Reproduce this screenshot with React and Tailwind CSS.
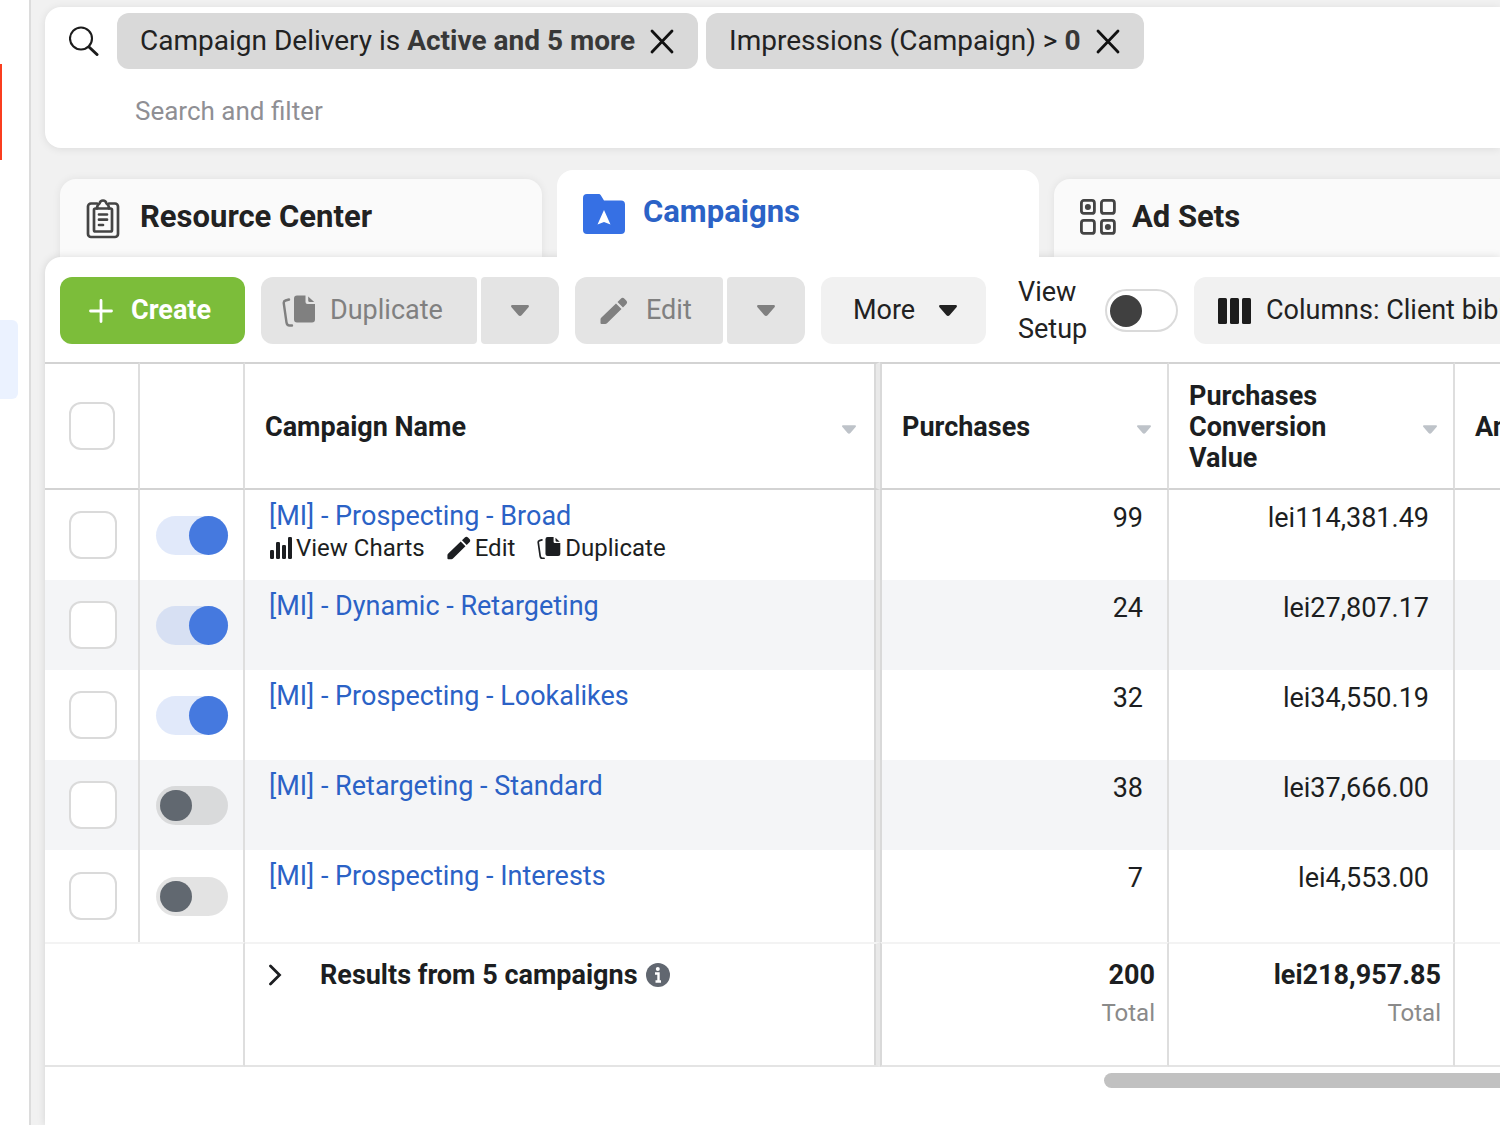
import clsx from "clsx";

const filters = [
  { id: "delivery", label: "Campaign Delivery is", value: "Active and 5 more" },
  { id: "impressions", label: "Impressions (Campaign) >", value: "0" },
];

const campaigns = [
  { id: 1, name: "[MI] - Prospecting - Broad", active: true, purchases: "99", value: "lei114,381.49", showActions: true },
  { id: 2, name: "[MI] - Dynamic - Retargeting", active: true, purchases: "24", value: "lei27,807.17" },
  { id: 3, name: "[MI] - Prospecting - Lookalikes", active: true, purchases: "32", value: "lei34,550.19" },
  { id: 4, name: "[MI] - Retargeting - Standard", active: false, purchases: "38", value: "lei37,666.00" },
  { id: 5, name: "[MI] - Prospecting - Interests", active: false, purchases: "7", value: "lei4,553.00" },
];

function SearchIcon() {
  return (
    <svg width="30" height="30" viewBox="0 0 30 30" fill="none" stroke="#1c1c1c" aria-hidden="true">
      <circle cx="12" cy="12.5" r="11" strokeWidth="2.1" />
      <path d="M20 21l8 7.5" strokeWidth="3" strokeLinecap="round" />
    </svg>
  );
}

function CloseIcon() {
  return (
    <svg width="26" height="26" viewBox="0 0 26 26" fill="none" stroke="#111" strokeWidth="2.8" strokeLinecap="round" aria-hidden="true">
      <path d="M3 3l20 21M23 3L3 24" />
    </svg>
  );
}

function ClipboardIcon() {
  return (
    <svg width="34" height="40" viewBox="0 0 34 40" fill="none" stroke="#444" strokeWidth="2.7" strokeLinecap="round" strokeLinejoin="round" aria-hidden="true">
      <path d="M11 4.5H5a3 3 0 0 0-3 3V35a3 3 0 0 0 3 3h24a3 3 0 0 0 3-3V7.5a3 3 0 0 0-3-3h-6" />
      <path d="M11 9.5H9.500A1.500 1.500 0 0 0 8 11v20a1.500 1.500 0 0 0 1.500 1.500h15A1.500 1.500 0 0 0 26 31V11a1.500 1.500 0 0 0-1.500-1.500H23" />
      <path d="M11 9.500c0-2.500 1-4 2.500-5C14 2.500 15.200 1.500 17 1.500s3 1 3.500 3c1.500 1 2.500 2.500 2.500 5z" />
      <path d="M13 15.500h8M13 20.700h8M13 26h4" />
    </svg>
  );
}

function FolderIcon() {
  return (
    <svg width="42" height="42" viewBox="0 0 42 42" aria-hidden="true">
      <path d="M4 0h11.500c1 0 1.800.5 2.300 1.300L21 6.500h17a4 4 0 0 1 4 4V36a4 4 0 0 1-4 4H4a4 4 0 0 1-4-4V4a4 4 0 0 1 4-4z" fill="#3670e4" />
      <path d="M21 16l6.500 14.500L21 28l-6.500 2.500z" fill="#fff" />
    </svg>
  );
}

function AdSetsIcon() {
  return (
    <svg width="36" height="36" viewBox="0 0 36 36" fill="none" stroke="#444" strokeWidth="2.8" aria-hidden="true">
      <rect x="1.400" y="1.400" width="13" height="13" rx="2.500" />
      <rect x="21.400" y="1.400" width="13" height="13" rx="2.500" />
      <rect x="1.400" y="21.400" width="13" height="13" rx="2.500" />
      <rect x="21.400" y="21.400" width="13" height="13" rx="2.500" />
      <circle cx="7.900" cy="7.900" r="3" fill="#444" stroke="none" />
      <circle cx="27.900" cy="27.900" r="3" fill="#444" stroke="none" />
    </svg>
  );
}

function DuplicateIcon({ className }) {
  return (
    <svg className={className} viewBox="0 0 34 32" aria-hidden="true">
      <path d="M7 4.500L3.500 5.500C2 6 1.500 7 1.800 8.500L4.500 27.500c.3 2 1.200 3 3 3H10" fill="none" stroke="currentColor" strokeWidth="2.400" strokeLinecap="round" />
      <path d="M15 .5h8.500V7a2 2 0 0 0 2 2H33v15.500a3 3 0 0 1-3 3H15a3 3 0 0 1-3-3V3.500a3 3 0 0 1 3-3z" fill="currentColor" />
      <path d="M26.200 1.500l6 5.500h-4.500a1.500 1.500 0 0 1-1.500-1.500z" fill="currentColor" />
    </svg>
  );
}

function PencilIcon({ className }) {
  return (
    <svg className={className} viewBox="0 0 28 28" fill="currentColor" aria-hidden="true">
      <path d="M16 6.500l5.500 5.500L7 26.300c-.5.500-1 .7-1.800.7H1.500a1 1 0 0 1-1-1v-3.500c0-.8.2-1.300.7-1.800z" />
      <path d="M17.500 5l3.300-3.300c1.200-1.200 2.500-1.200 3.700 0l1.700 1.800c1.200 1.200 1.200 2.500 0 3.700L23 10.500z" />
    </svg>
  );
}

function ChartIcon() {
  return (
    <svg width="23" height="22" viewBox="0 0 23 22" fill="#1c1e21" aria-hidden="true">
      <rect x="1" y="13" width="4" height="9" rx="1.200" />
      <rect x="7" y="5" width="4" height="17" rx="1.200" />
      <rect x="13" y="8" width="4" height="14" rx="1.200" />
      <rect x="19" y="0" width="4" height="22" rx="1.200" />
    </svg>
  );
}

function ColumnsIcon() {
  return (
    <svg width="34" height="26" viewBox="0 0 34 26" fill="#1c1c1c" aria-hidden="true">
      <rect x="0" y="0" width="9" height="26" rx="1.500" />
      <rect x="12" y="0" width="9" height="26" rx="1.500" />
      <rect x="24" y="0" width="9" height="26" rx="1.500" />
    </svg>
  );
}

function Caret({ className }) {
  return (
    <svg className={className} viewBox="0 0 18 11" fill="currentColor" aria-hidden="true">
      <path d="M1.500 0h15c1.300 0 1.900 1.200 1 2.200L10.800 10c-1 1.200-2.600 1.200-3.600 0L.5 2.200C-.4 1.200.2 0 1.500 0z" />
    </svg>
  );
}

function InfoIcon() {
  return (
    <svg width="24" height="24" viewBox="0 0 24 24" aria-hidden="true">
      <circle cx="12" cy="12" r="12" fill="#616770" />
      <circle cx="11.800" cy="6" r="2" fill="#fff" />
      <path d="M9 10.500h3.500V18M9.500 18.500h5.500" fill="none" stroke="#fff" strokeWidth="2.400" />
    </svg>
  );
}

function Tab({ icon, label, active }) {
  return (
    <button
      type="button"
      className={clsx(
        "flex w-[482px] shrink-0 items-start rounded-t-2xl px-[26px] text-left text-[31px] leading-9 font-bold",
        active ? "z-10 h-[88px] bg-white pt-6 text-[#2b62c6]" : "h-[79px] bg-[#fafafa] pt-5 text-[#222] shadow-[0_0_8px_rgba(0,0,0,0.07)]"
      )}
    >
      {icon}
      <span>{label}</span>
    </button>
  );
}

function Checkbox({ label, className }) {
  return (
    <input
      type="checkbox"
      aria-label={label}
      className={clsx("block h-12 appearance-none rounded-xl border-2 border-[#dadada] bg-white checked:bg-[#4579df]", className)}
    />
  );
}

function Toggle({ label, checked }) {
  return (
    <input
      type="checkbox"
      role="switch"
      aria-label={label}
      defaultChecked={checked}
      className="flex h-[39px] w-[72px] appearance-none items-center rounded-full bg-black/11 px-1 before:h-[31px] before:w-8 before:rounded-full before:bg-[#616870] checked:justify-end checked:bg-[#4579df]/16 checked:px-0 checked:before:h-[39px] checked:before:w-[39px] checked:before:bg-[#4579df]"
    />
  );
}

function HeaderCell({ label, className }) {
  return (
    <th scope="col" className={clsx("border-y-2 border-y-[#d3d3d3] pt-[2px] pl-5 text-left align-middle", className)}>
      <div className="flex items-center justify-between">
        <span>{label}</span>
        <Caret className="mt-1 h-[9px] w-[14px] shrink-0 text-[#bec3c9]" />
      </div>
    </th>
  );
}

const thin = "border-r-2 border-r-[#dedede]";
// the frozen columns end in a grey strip with a darker line on each side
const stripStart = "border-r-4 border-r-[#e9e9e9] shadow-[inset_-2px_0_#d9d9d9]";
const stripEnd = "border-l-2 border-l-[#d9d9d9]";
const footerLines = "border-y-2 border-t-[#f3f3f3] border-b-[#e4e4e4]";

function CampaignTable() {
  return (
    <table className="w-[1740px] table-fixed border-separate border-spacing-0 text-[27px] text-[#1c1e21]">
      <colgroup>
        <col className="w-[95px]" />
        <col className="w-[105px]" />
        <col className="w-[635px]" />
        <col className="w-[289px]" />
        <col className="w-[286px]" />
        <col />
      </colgroup>
      <thead>
        <tr className="h-32 leading-[31px] font-bold">
          <th scope="col" className={clsx("border-y-2 border-y-[#d3d3d3] pl-6", thin)}>
            <Checkbox label="Select all campaigns" className="w-[46px]" />
          </th>
          <td className={clsx("border-y-2 border-y-[#d3d3d3]", thin)} />
          <HeaderCell label="Campaign Name" className={clsx("pr-5", stripStart)} />
          <HeaderCell label="Purchases" className={clsx("pr-4", thin, stripEnd)} />
          <HeaderCell label={<>Purchases<br />Conversion<br />Value</>} className={clsx("pr-4", thin)} />
          <HeaderCell label="Amount Spent" className="pr-4" />
        </tr>
      </thead>
      <tbody>
        {campaigns.map((campaign) => (
          <tr key={campaign.id} className="h-[90px] last:h-[92px] even:bg-[#f4f5f7]">
            <td className={clsx("pl-6", thin)}>
              <Checkbox label={`Select ${campaign.name}`} className="w-12" />
            </td>
            <td className={clsx("pl-4", thin)}>
              <Toggle label={`Turn ${campaign.name} on or off`} checked={campaign.active} />
            </td>
            <td className={clsx("pt-[9px] pl-6 align-top", stripStart)}>
              <a href="#" className="block leading-[34px] text-[#2b62c6]">
                {campaign.name}
              </a>
              {campaign.showActions && (
                <div className="flex gap-[22px] text-2xl leading-[30px]">
                  <button type="button" className="flex items-center gap-1">
                    <ChartIcon />
                    View Charts
                  </button>
                  <button type="button" className="flex items-center gap-1">
                    <PencilIcon className="h-6 w-6" />
                    Edit
                  </button>
                  <button type="button" className="flex items-center gap-1">
                    <DuplicateIcon className="h-6 w-6" />
                    Duplicate
                  </button>
                </div>
              )}
            </td>
            <td className={clsx("pt-[11px] pr-6 text-right align-top leading-[34px]", thin, stripEnd)}>{campaign.purchases}</td>
            <td className={clsx("pt-[11px] pr-6 text-right align-top leading-[34px]", thin)}>{campaign.value}</td>
            <td />
          </tr>
        ))}
      </tbody>
      <tfoot>
        <tr className="h-[125px] align-top">
          <td colSpan={2} className={clsx(footerLines, thin)} />
          <td className={clsx("pt-[14px] pl-6", footerLines, stripStart)}>
            <div className="flex items-center leading-[34px] font-bold">
              <button type="button" aria-label="Expand results" className="w-[51px]">
                <svg width="14" height="22" viewBox="0 0 14 22" fill="none" stroke="#1c1e21" strokeWidth="2.800" strokeLinecap="round" aria-hidden="true">
                  <path d="M1.500 2l9 9-9 9" />
                </svg>
              </button>
              <span className="mr-2">Results from 5 campaigns</span>
              <InfoIcon />
            </div>
          </td>
          <td className={clsx("pt-[14px] pr-3 text-right", footerLines, thin, stripEnd)}>
            <div className="leading-[34px] font-bold">200</div>
            <div className="text-2xl leading-[42px] text-[#8a8a8a]">Total</div>
          </td>
          <td className={clsx("pt-[14px] pr-3 text-right", footerLines, thin)}>
            <div className="leading-[34px] font-bold">lei218,957.85</div>
            <div className="text-2xl leading-[42px] text-[#8a8a8a]">Total</div>
          </td>
          <td className={footerLines} />
        </tr>
      </tfoot>
    </table>
  );
}

export default function App() {
  const mutedButton = "flex h-[67px] shrink-0 items-center bg-[#e4e4e4] text-[#808080]";

  return (
    <div className="flex min-h-screen overflow-hidden bg-[#f1f1f1] font-['Roboto',sans-serif] text-[27px] text-[#222]">
      <aside className="flex w-[31px] shrink-0 flex-col border-r-2 border-[#dcdcdc] bg-white pt-16">
        <div className="h-24 w-[2px] bg-[#fa3e1f]" />
        <div className="mt-40 h-[79px] w-[18px] rounded-r-md bg-[#ebf2ff]" />
      </aside>

      <main className="flex min-w-0 flex-1 flex-col pt-[7px] pl-[14px]">
        <section className="h-[141px] rounded-l-2xl bg-white pt-[6px] pl-6 shadow-[0_1px_8px_rgba(0,0,0,0.09)]">
          <div className="flex items-center">
            <div className="w-12">
              <SearchIcon />
            </div>
            <div className="flex gap-2">
              {filters.map((filter) => (
                <div key={filter.id} className="flex h-14 items-center gap-[14px] rounded-xl bg-[#d9d9d9] px-[23px] text-[28px]">
                  <span>
                    {filter.label} <b className="text-[#383838]">{filter.value}</b>
                  </span>
                  <button type="button" aria-label={`Remove ${filter.label}`}>
                    <CloseIcon />
                  </button>
                </div>
              ))}
            </div>
          </div>
          <input
            type="text"
            aria-label="Search and filter"
            placeholder="Search and filter"
            className="mt-5 ml-[66px] block h-11 w-96 text-[26px] outline-none placeholder:text-[#8f8f94]"
          />
        </section>

        <nav className="mt-[22px] flex items-end gap-[15px] pl-[15px]">
          <Tab icon={<span className="mr-5"><ClipboardIcon /></span>} label="Resource Center" />
          <Tab icon={<span className="mr-[18px]"><FolderIcon /></span>} label="Campaigns" active />
          <Tab icon={<span className="mr-4"><AdSetsIcon /></span>} label="Ad Sets" />
        </nav>

        <section className="-mt-px flex-1 rounded-tl-2xl bg-white shadow-[0_0_8px_rgba(0,0,0,0.12)]">
          <div className="flex h-[105px] items-center gap-4 pt-[2px] pl-[15px]">
            <button
              type="button"
              className="flex h-[67px] w-[185px] shrink-0 items-center gap-[18px] rounded-xl bg-[#7cbd3a] pl-[29px] font-bold text-white"
            >
              <svg width="24" height="24" viewBox="0 0 24 24" stroke="#fff" strokeWidth="2.800" strokeLinecap="round" aria-hidden="true">
                <path d="M12 1.500v21M1.500 12h21" />
              </svg>
              Create
            </button>

            <div className="flex gap-1">
              <button type="button" className={clsx(mutedButton, "w-[216px] gap-[14px] rounded-l-xl rounded-r-sm pl-[21px]")}>
                <DuplicateIcon className="h-8 w-[34px]" />
                Duplicate
              </button>
              <button type="button" aria-label="Duplicate options" className={clsx(mutedButton, "w-[78px] justify-center rounded-l-sm rounded-r-xl")}>
                <Caret className="h-[11px] w-[18px]" />
              </button>
            </div>

            <div className="flex gap-1">
              <button type="button" className={clsx(mutedButton, "w-[148px] gap-[18px] rounded-l-xl rounded-r-sm pl-[25px]")}>
                <PencilIcon className="h-7 w-7" />
                Edit
              </button>
              <button type="button" aria-label="Edit options" className={clsx(mutedButton, "w-[78px] justify-center rounded-l-sm rounded-r-xl")}>
                <Caret className="h-[11px] w-[18px]" />
              </button>
            </div>

            <button type="button" className="flex h-[67px] w-[165px] shrink-0 items-center gap-6 rounded-xl bg-[#f1f1f1] pl-8">
              More
              <Caret className="h-[11px] w-[18px]" />
            </button>

            <div className="flex shrink-0 items-center pl-4">
              <label htmlFor="view-setup" className="w-[87px] leading-[37px]">
                View Setup
              </label>
              <input
                id="view-setup"
                type="checkbox"
                role="switch"
                className="flex h-[43px] w-[73px] appearance-none items-center rounded-full border-2 border-[#dadada] bg-white px-[3px] before:h-8 before:w-8 before:rounded-full before:bg-[#404040] checked:justify-end"
              />
            </div>

            <button type="button" className="flex h-[67px] shrink-0 items-center gap-[14px] rounded-xl bg-[#f1f1f1] px-6">
              <ColumnsIcon />
              Columns: Client bible
            </button>
          </div>

          <div className="overflow-hidden">
            <CampaignTable />
            <div className="mt-[6px] ml-[1059px] h-[15px] rounded-l-full bg-[#c1c1c1]" />
          </div>
        </section>
      </main>
    </div>
  );
}
